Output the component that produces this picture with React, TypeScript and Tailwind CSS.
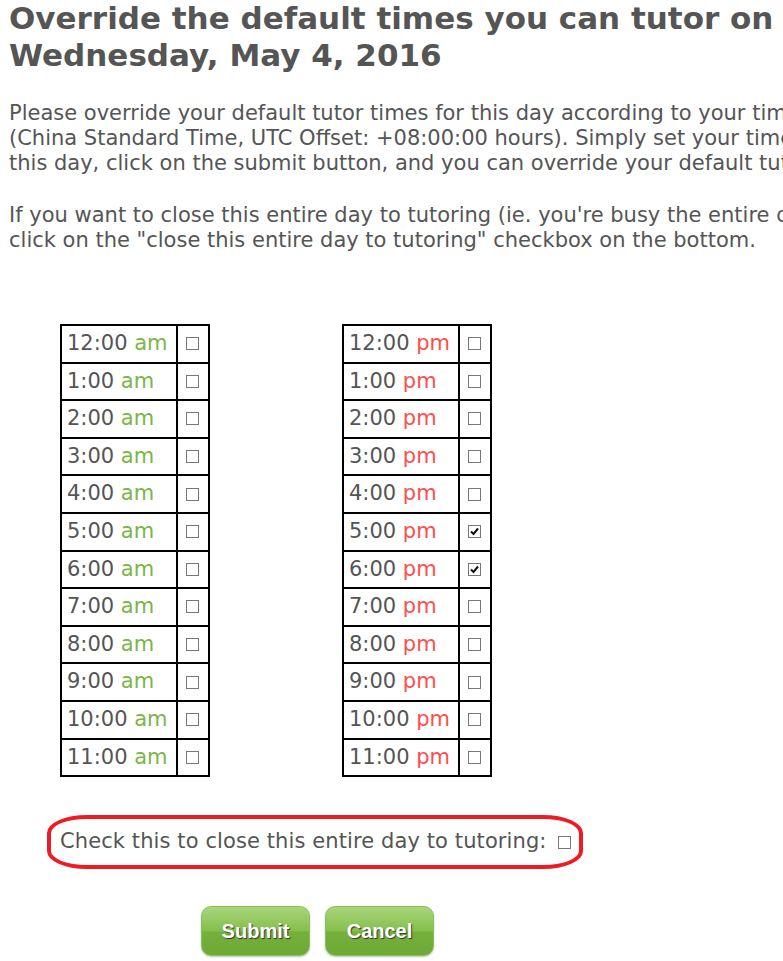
import { useState } from 'react';

const hours = ['12:00', '1:00', '2:00', '3:00', '4:00', '5:00', '6:00', '7:00', '8:00', '9:00', '10:00', '11:00'];

function Box({ checked, onClick }: { checked: boolean; onClick: () => void }) {
  return (
    <button
      type="button"
      onClick={onClick}
      className="flex h-[13px] w-[13px] items-center justify-center border border-[#777] bg-white"
    >
      {checked && (
        <svg viewBox="0 0 11 11" className="h-[11px] w-[11px]">
          <path d="M2 5.5 L4.5 8 L9 2.5" fill="none" stroke="#111" strokeWidth="2" />
        </svg>
      )}
    </button>
  );
}

function TimeTable({ suffix, color, checked, toggle }: { suffix: string; color: string; checked: boolean[]; toggle: (i: number) => void }) {
  return (
    <table className="border-collapse border-2 border-black">
      <tbody>
        {hours.map((h, i) => (
          <tr key={h} className="h-[37.6px]">
            <td className="w-[116px] border-2 border-black px-[5px] text-[21px] whitespace-nowrap text-[#555]">
              {h} <span className={color}>{suffix}</span>
            </td>
            <td className="w-[32px] border-2 border-black">
              <div className="flex justify-center pr-[2px]">
                <Box checked={checked[i]} onClick={() => toggle(i)} />
              </div>
            </td>
          </tr>
        ))}
      </tbody>
    </table>
  );
}

export default function App() {
  const [am, setAm] = useState<boolean[]>(Array(12).fill(false));
  const [pm, setPm] = useState<boolean[]>(hours.map((_, i) => i === 5 || i === 6));
  const [closed, setClosed] = useState(false);

  const flip = (arr: boolean[], set: (v: boolean[]) => void) => (i: number) =>
    set(arr.map((v, j) => (j === i ? !v : v)));

  return (
    <div className="h-[961px] w-[783px] overflow-hidden bg-white text-[#555]" style={{ fontFamily: '"DejaVu Sans", Verdana, sans-serif' }}>
      {/* Heading */}
      <h1 className="whitespace-nowrap pl-[9px] text-[31px] font-bold leading-[37px]">
        Override the default times you can tutor on
        <br />
        Wednesday, May 4, 2016
      </h1>

      {/* Instructions */}
      <div className="mt-[27px] whitespace-nowrap pl-[9px] text-[21px] leading-[25px]">
        <p>
          Please override your default tutor times for this day according to your time zone
          <br />
          (China Standard Time, UTC Offset: +08:00:00 hours). Simply set your times for
          <br />
          this day, click on the submit button, and you can override your default tutor times.
        </p>
        <p className="mt-[27px]">
          If you want to close this entire day to tutoring (ie. you're busy the entire day),
          <br />
          click on the "close this entire day to tutoring" checkbox on the bottom.
        </p>
      </div>

      {/* Tables */}
      <div className="mt-[71px] flex gap-[132px] pl-[60px]">
        <TimeTable suffix="am" color="text-[#7ab648]" checked={am} toggle={flip(am, setAm)} />
        <TimeTable suffix="pm" color="text-[#ff4d4d]" checked={pm} toggle={flip(pm, setPm)} />
      </div>

      {/* Close whole day */}
      <div className="ml-[47px] mt-[38px] flex h-[54px] w-[536px] items-center rounded-[40px/18px] border-[4px] border-[#ed1c24] pl-[9px]">
        <span className="text-[21px] tracking-[0.1px]">Check this to close this entire day to tutoring:</span>
        <span className="ml-[11px]">
          <Box checked={closed} onClick={() => setClosed(!closed)} />
        </span>
      </div>

      {/* Buttons */}
      <div className="mt-[37px] flex gap-[15px] pl-[201px]">
        {['Submit', 'Cancel'].map((t) => (
          <button
            key={t}
            type="button"
            className="h-[50px] w-[109px] rounded-[10px] border border-[#8cc15a] bg-[linear-gradient(#a8d57a,#86bf4c_50%,#74b03b_52%,#6fa936)] text-[20px] font-bold text-white shadow-[0_1px_2px_rgba(0,0,0,0.25)] [text-shadow:1px_1px_1px_#333]"
            style={{ fontFamily: '"Liberation Sans", Arial, sans-serif' }}
          >
            {t}
          </button>
        ))}
      </div>
    </div>
  );
}
